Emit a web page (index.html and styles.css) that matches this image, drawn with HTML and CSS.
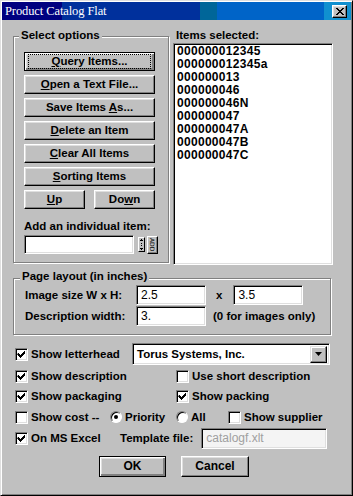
FILE: index.html
```html
<!DOCTYPE html>
<html>
<head>
<meta charset="utf-8">
<link rel="stylesheet" href="styles.css">
</head>
<body>
<div class="window">
  <div class="titlebar">
    <span class="title">Product Catalog Flat</span>
    <span class="close"><svg width="8" height="7" viewBox="0 0 8 7"><path d="M0 0h2v1h1v1h2v-1h1v-1h2v1h-1v1h-1v1h-1v1h1v1h1v1h1v1h-2v-1h-1v-1h-2v1h-1v1h-2v-1h1v-1h1v-1h1v-1h-1v-1h-1v-1h-1z" fill="#000"/></svg></span>
  </div>
  <div class="content">
    <div class="top">
      <div class="group select-group">
        <div class="legend">Select options</div>
        <div class="btns">
          <div class="btn focus"><span class="focusrect"><span><u>Q</u>uery Items...</span></span></div>
          <div class="btn"><span><u>O</u>pen a Text File...</span></div>
          <div class="btn"><span>Save Items <u>A</u>s...</span></div>
          <div class="btn"><span><u>D</u>elete an Item</span></div>
          <div class="btn"><span><u>C</u>lear All Items</span></div>
          <div class="btn"><span><u>S</u>orting Items</span></div>
          <div class="btn-pair">
            <div class="btn small"><span><u>U</u>p</span></div>
            <div class="btn small"><span>Do<u>w</u>n</span></div>
          </div>
        </div>
        <div class="label add-label">Add an individual item:</div>
        <div class="add-row">
          <div class="field add-field"></div>
          <div class="spin"><svg width="3" height="11" viewBox="0 0 3 11"><path d="M1 0h1v1h1v1h-3v-1h1z M1 4h1v1h-1z M1 6h1v1h-1z M0 9h3v1h-1v1h-1v-1h-1z" fill="#000"/></svg></div>
          <div class="addbtn"><span>ADD</span></div>
        </div>
      </div>
      <div class="items-col">
        <div class="label items-label">Items selected:</div>
        <div class="listbox">
          <div class="item">000000012345</div>
          <div class="item">000000012345a</div>
          <div class="item">000000013</div>
          <div class="item">000000046</div>
          <div class="item">000000046N</div>
          <div class="item">000000047</div>
          <div class="item">000000047A</div>
          <div class="item">000000047B</div>
          <div class="item">000000047C</div>
        </div>
      </div>
    </div>

    <div class="group layout-group">
      <div class="legend">Page layout (in inches)</div>
      <div class="lrow">
        <span class="label lcol">Image size W x H:</span>
        <div class="field num">2.5</div>
        <span class="label times">x</span>
        <div class="field num">3.5</div>
      </div>
      <div class="lrow">
        <span class="label lcol">Description width:</span>
        <div class="field num">3.</div>
        <span class="label hint">(0 for images only)</span>
      </div>
    </div>

    <div class="opts">
      <div class="orow row-a">
        <div class="cell c1"><span class="cb checked"></span><span class="label">Show letterhead</span></div>
        <div class="combo"><span class="combo-text">Torus Systems, Inc.</span><span class="combo-btn"><svg width="7" height="4" viewBox="0 0 7 4"><path d="M0 0h7l-3.5 4z" fill="#000"/></svg></span></div>
      </div>
      <div class="orow row-b">
        <div class="cell c2"><span class="cb checked"></span><span class="label">Show description</span></div>
        <div class="cell"><span class="cb"></span><span class="label">Use short description</span></div>
      </div>
      <div class="orow row-c">
        <div class="cell c2"><span class="cb checked"></span><span class="label">Show packaging</span></div>
        <div class="cell"><span class="cb checked"></span><span class="label">Show packing</span></div>
      </div>
      <div class="orow row-d">
        <div class="cell c3"><span class="cb"></span><span class="label">Show cost --</span></div>
        <div class="cell c4"><span class="radio on"></span><span class="label">Priority</span></div>
        <div class="cell c5"><span class="radio"></span><span class="label">All</span></div>
        <div class="cell"><span class="cb"></span><span class="label">Show supplier</span></div>
      </div>
      <div class="orow row-e">
        <div class="cell c6"><span class="cb checked"></span><span class="label">On MS Excel</span></div>
        <span class="label tpl">Template file:</span>
        <div class="field tplfield">catalogf.xlt</div>
      </div>
      <div class="actions">
        <div class="btn default"><span>OK</span></div>
        <div class="btn cancel"><span>Cancel</span></div>
      </div>
    </div>
  </div>
</div>
</body>
</html>
```
FILE: styles.css
```css
html, body {
  margin: 0;
  padding: 0;
  background: #c0c0c0;
}
body {
  font-family: "Liberation Sans", Arial, sans-serif;
  font-size: 11.5px;
  font-weight: bold;
  color: #000;
}
.window {
  box-sizing: border-box;
  width: 353px;
  height: 496px;
  border: 1px solid;
  border-color: #dfdfdf #000 #000 #dfdfdf;
  box-shadow: inset 1px 1px #fff, inset -1px -1px #808080;
  padding: 1px;
  background: #c0c0c0;
}
.titlebar {
  height: 18px;
  display: flex;
  align-items: center;
  justify-content: space-between;
  background: linear-gradient(to right, #000080 0 60px, #00309c 60px 198px, #006699 198px 215px, #0064c8 215px 322px, #1090d0 322px);
  padding: 0 4px 0 3px;
}
.title {
  font-family: "Liberation Serif", "Times New Roman", serif;
  font-weight: normal;
  font-size: 12.5px;
  color: #fff;
  letter-spacing: -0.1px;
}
.close {
  box-sizing: border-box;
  width: 15px;
  height: 13px;
  background: #c0c0c0;
  border: 1px solid;
  border-color: #fff #000 #000 #fff;
  box-shadow: inset -1px -1px #808080, inset 1px 1px #dfdfdf;
  display: flex;
  align-items: center;
  justify-content: center;
}
.content {
  padding-left: 11px;
}
.top {
  display: flex;
  align-items: flex-start;
  gap: 4px;
  margin-top: 9px;
}
.group {
  box-sizing: border-box;
  border: 1px solid #808080;
  box-shadow: inset 1px 1px #fff, 1px 1px #fff;
}
.legend {
  width: max-content;
  background: #c0c0c0;
  line-height: 13px;
  padding: 0 2px;
}
.select-group {
  width: 156px;
  height: 227px;
  margin-top: 7px;
  padding: 0 10px;
}
.select-group .legend {
  margin: -8px 0 0 -5px;
}
.btns {
  display: flex;
  flex-direction: column;
  gap: 4px;
  margin-top: 10px;
  width: 131px;
}
.btn {
  box-sizing: border-box;
  height: 19px;
  border: 1px solid;
  border-color: #fff #000 #000 #fff;
  box-shadow: inset -1px -1px #808080, inset 1px 1px #dfdfdf;
  background: #c0c0c0;
  display: flex;
  align-items: center;
  justify-content: center;
  line-height: 13px;
  white-space: pre;
}
.btn.focus {
  border: 1px solid #000;
  box-shadow: inset 1px 1px #fff, inset -2px -2px #808080, inset 2px 2px #dfdfdf;
}
.focusrect {
  display: flex;
  align-items: center;
  justify-content: center;
  box-sizing: border-box;
  width: 121px;
  height: 13px;
  outline: 1px dotted #000;
}
.btn-pair {
  display: flex;
  justify-content: space-between;
}
.btn.small {
  width: 61px;
}
u {
  text-decoration: underline;
  text-underline-offset: 1px;
}
.label {
  line-height: 13px;
  white-space: nowrap;
}
.add-label {
  margin-top: 11px;
}
.add-row {
  display: flex;
  align-items: center;
  margin-top: 2px;
  height: 19px;
}
.field {
  box-sizing: border-box;
  border: 1px solid;
  border-color: #808080 #fff #fff #808080;
  box-shadow: inset 1px 1px #000, inset -1px -1px #dfdfdf;
  background: #fff;
}
.add-field {
  width: 114px;
  height: 19px;
}
.spin {
  box-sizing: border-box;
  width: 8px;
  height: 15px;
  margin-left: 4px;
  border: 1px solid;
  border-color: #fff #000 #000 #fff;
  background: #c0c0c0;
  display: flex;
  align-items: center;
  justify-content: center;
}
.addbtn {
  box-sizing: border-box;
  width: 11px;
  height: 18px;
  margin-left: 2px;
  border: 1px solid;
  border-color: #fff #000 #000 #fff;
  box-shadow: inset -1px -1px #808080;
  background: #c0c0c0;
  display: flex;
  align-items: center;
  justify-content: center;
  font-family: "DejaVu Sans", sans-serif;
  font-size: 6px;
  font-weight: normal;
}
.addbtn span {
  writing-mode: vertical-rl;
  line-height: 7px;
  letter-spacing: 0;
}
.items-col {
  display: flex;
  flex-direction: column;
}
.items-label {
  padding-left: 3px;
}
.listbox {
  box-sizing: border-box;
  width: 160px;
  height: 222px;
  margin-top: 1px;
  border: 1px solid;
  border-color: #808080 #fff #fff #808080;
  box-shadow: inset 1px 1px #000, inset -1px -1px #dfdfdf;
  background: #fff;
  padding: 1px 3px;
  font-size: 12px;
}
.item {
  line-height: 13px;
  letter-spacing: 0.3px;
}
.layout-group {
  width: 318px;
  height: 57px;
  margin-top: 13px;
  padding: 0 0 0 11px;
}
.layout-group .legend {
  margin: -9px 0 0 -5px;
  margin-bottom: 2px;
}
.lrow {
  display: flex;
  align-items: center;
  height: 20px;
  margin-bottom: 1px;
}
.lcol {
  width: 111px;
}
.num {
  width: 70px;
  height: 20px;
  font-weight: normal;
  font-size: 12px;
  padding: 2px 0 0 4px;
  line-height: 14px;
}
.times {
  margin: 0 11px 0 10px;
}
.hint {
  margin-left: 7px;
}
.opts {
  margin-left: 2px;
  margin-top: 8px;
}
.orow {
  display: flex;
  align-items: center;
}
.row-a { height: 22px; }
.row-b { height: 20px; margin-top: 1px; }
.row-c { height: 20px; }
.row-d { height: 20px; margin-top: 1px; }
.row-e { height: 22px; }
.cell {
  display: flex;
  align-items: center;
}
.c1 { width: 117px; }
.c2 { width: 161px; }
.c3 { width: 95px; }
.c4 { width: 66px; }
.c5 { width: 52px; }
.c6 { width: 105px; }
.cb {
  box-sizing: border-box;
  width: 13px;
  height: 13px;
  margin-right: 3px;
  border: 1px solid;
  border-color: #808080 #fff #fff #808080;
  box-shadow: inset 1px 1px #000, inset -1px -1px #dfdfdf;
  background: #fff;
  flex: none;
}
.cb.checked {
  background: #fff url("data:image/svg+xml;utf8,<svg xmlns='http://www.w3.org/2000/svg' width='11' height='11'><path d='M2 4h1v1h1v1h1v-1h1v-1h1v-1h1v-1h1v3h-1v1h-1v1h-1v1h-1v1h-1v-1h-1v-1h-1v-1h-1z' fill='black'/></svg>") no-repeat 0 0;
}
.radio {
  box-sizing: border-box;
  width: 12px;
  height: 12px;
  border-radius: 50%;
  margin-right: 3px;
  border: 1px solid;
  border-color: #808080 #fff #fff #808080;
  box-shadow: inset 1px 1px #000;
  background: #fff;
  flex: none;
  display: flex;
  align-items: center;
  justify-content: center;
}
.radio.on::after {
  content: "";
  width: 4px;
  height: 4px;
  border-radius: 50%;
  background: #000;
}
.combo {
  box-sizing: border-box;
  width: 198px;
  height: 22px;
  display: flex;
  align-items: center;
  justify-content: space-between;
  border: 1px solid;
  border-color: #808080 #fff #fff #808080;
  box-shadow: inset 1px 1px #000, inset -1px -1px #dfdfdf;
  background: #fff;
  padding: 0 2px 0 4px;
}
.combo-btn {
  box-sizing: border-box;
  width: 17px;
  height: 17px;
  border: 1px solid;
  border-color: #dfdfdf #000 #000 #dfdfdf;
  box-shadow: inset -1px -1px #808080, inset 1px 1px #fff;
  background: #c0c0c0;
  display: flex;
  align-items: center;
  justify-content: center;
}
.tpl {
  margin-right: 8px;
}
.tplfield {
  width: 126px;
  height: 21px;
  font-weight: normal;
  font-size: 12px;
  color: #a0a0a0;
  padding: 2px 0 0 4px;
  line-height: 14px;
  background: #f4f4f4;
}
.actions {
  display: flex;
  gap: 15px;
  margin-top: 7px;
  padding-left: 84px;
}
.actions .btn {
  height: 21px;
  font-size: 12px;
}
.btn.default {
  width: 67px;
  border: 1px solid #000;
  box-shadow: inset 1px 1px #fff, inset -2px -2px #808080, inset 2px 2px #dfdfdf;
}
.btn.cancel {
  width: 68px;
}
```
